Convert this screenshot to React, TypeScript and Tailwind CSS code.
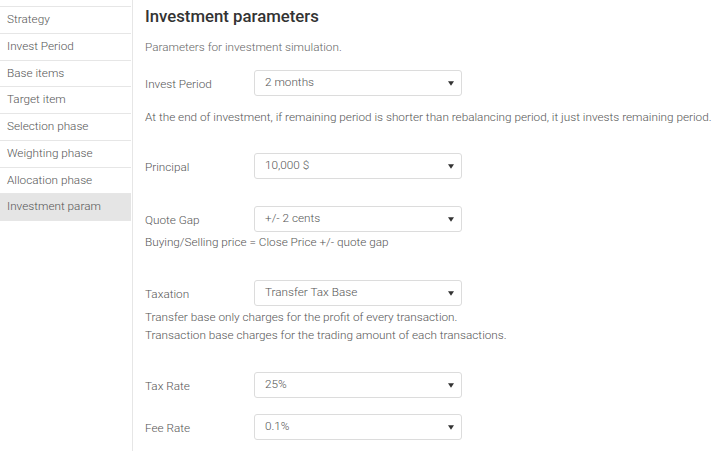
import React from "react";

const items = [
  "Strategy",
  "Invest Period",
  "Base items",
  "Target item",
  "Selection phase",
  "Weighting phase",
  "Allocation phase",
  "Investment param",
];

function Select({ value }: { value: string }) {
  return (
    <div className="w-[208px] h-[26px] border border-[#dcdcdc] rounded-[3px] bg-white flex items-center justify-between pl-[10px] pr-[7px] text-[#555]">
      <span className="-mt-[1px]">{value}</span>
      <svg width="6" height="5" viewBox="0 0 6 5">
        <path d="M0 0.3 H6 L3 4.8 Z" fill="#333" />
      </svg>
    </div>
  );
}

function Row({ label, value, className }: { label: string; value: string; className?: string }) {
  return (
    <div className={"flex items-center " + (className ?? "")}>
      <div className="w-[109px] pt-[3px] text-[#555]">{label}</div>
      <Select value={value} />
    </div>
  );
}

export default function App() {
  return (
    <div
      className="w-[720px] h-[451px] bg-white flex text-[11.75px] font-light overflow-hidden"
      style={{ fontFamily: "Roboto, 'Noto Sans', sans-serif" }}
    >
      <div className="w-[133px] border-r border-[#e6e6e6] pt-[6px] shrink-0">
        <div className="w-[131px] border-t border-[#e6e6e6]">
          {items.map((it, i) => (
            <div
              key={it}
              className={
                "h-[26.75px] flex items-center pl-[7px] border-b border-[#e6e6e6] text-[#555] " +
                (i === items.length - 1 ? "bg-[#e5e5e5]" : "")
              }
            >
              {it}
            </div>
          ))}
        </div>
      </div>
      <div className="pl-[12px] flex flex-col text-[#555]">
        <div className="mt-[4px] h-[24px] leading-[24px] text-[16.75px] font-medium text-[#333]">
          Investment parameters
        </div>
        <div className="mt-[10px] leading-[18px] text-[#666]">Parameters for investment simulation.</div>
        <Row label="Invest Period" value="2 months" className="mt-[14px]" />
        <div className="mt-[12px] leading-[18px] whitespace-nowrap">
          At the end of investment, if remaining period is shorter than rebalancing period, it just invests remaining period.
        </div>
        <Row label="Principal" value="10,000 $" className="mt-[27px]" />
        <Row label="Quote Gap" value="+/- 2 cents" className="mt-[27px]" />
        <div className="mt-[1px] leading-[18px]">Buying/Selling price = Close Price +/- quote gap</div>
        <Row label="Taxation" value="Transfer Tax Base" className="mt-[29px]" />
        <div className="mt-[2px] leading-[18px]">Transfer base only charges for the profit of every transaction.</div>
        <div className="leading-[18px]">Transaction base charges for the trading amount of each transactions.</div>
        <Row label="Tax Rate" value="25%" className="mt-[28px]" />
        <Row label="Fee Rate" value="0.1%" className="mt-[16px]" />
      </div>
    </div>
  );
}
